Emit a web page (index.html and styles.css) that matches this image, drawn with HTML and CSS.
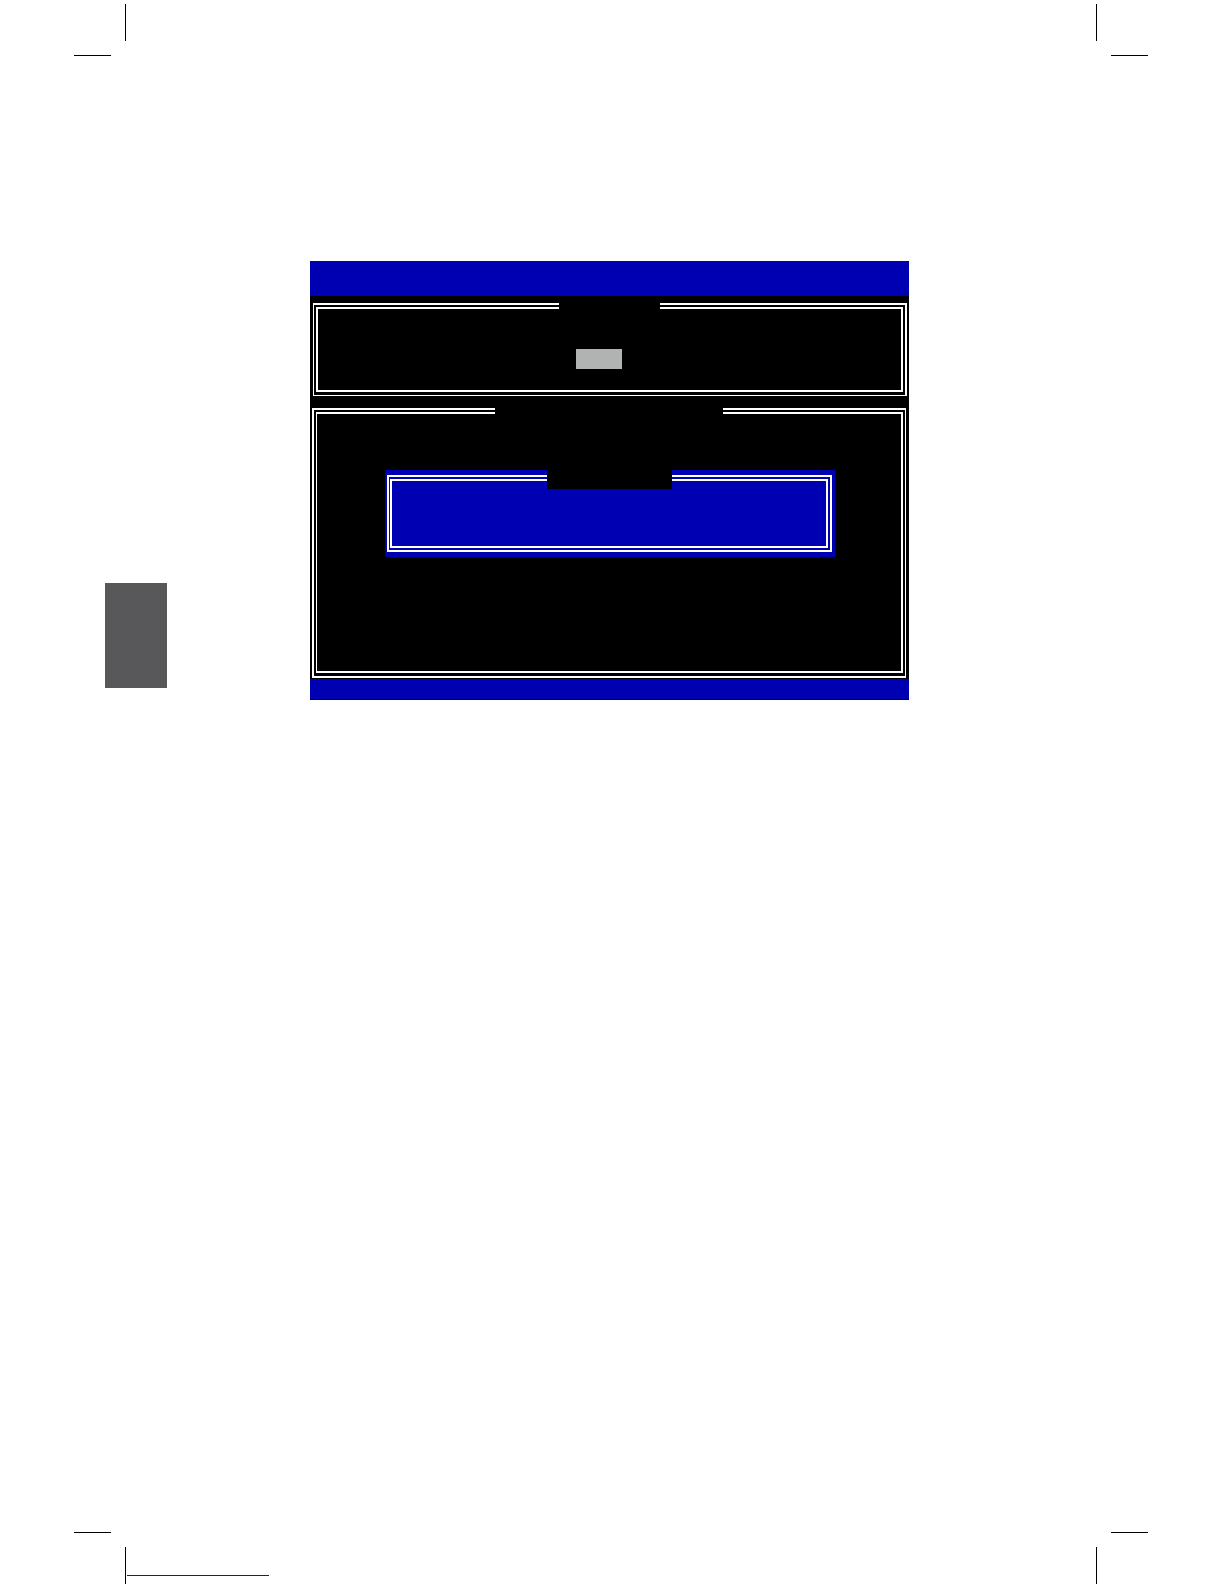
FILE: index.html
```html
<!DOCTYPE html>
<html lang="en">
<head>
  <meta charset="UTF-8">
  <meta name="viewport" content="width=device-width, initial-scale=1.0">
  <title>Setup Utility</title>
  <link rel="stylesheet" href="styles.css">
</head>
<body>
  <div class="page">
    <div class="marks">
      <svg class="mark" viewBox="0 0 52 52" aria-hidden="true">
        <path d="M51 0h1v37h-1zM0 51h37v1H0z"/>
      </svg>
      <svg class="mark" viewBox="0 0 52 52" aria-hidden="true">
        <path d="M0 0h1v37H0zM15 51h37v1H15z"/>
      </svg>
    </div>

    <main class="content">
      <div class="tab"></div>

      <div class="screen">
        <div class="screen-header"></div>

        <section class="panel options">
          <div class="panel-inner">
            <div class="panel-title"></div>
            <div class="menu">
              <div class="selected"></div>
            </div>
          </div>
        </section>

        <section class="panel details">
          <div class="panel-inner">
            <div class="panel-title"></div>
            <div class="dialog">
              <div class="panel">
                <div class="panel-inner">
                  <div class="panel-title"></div>
                </div>
              </div>
            </div>
          </div>
        </section>

        <div class="screen-footer"></div>
      </div>
    </main>

    <footer class="marks">
      <svg class="mark" viewBox="0 0 52 52" aria-hidden="true">
        <path d="M0 0h37v1H0zM51 15h1v37h-1z"/>
      </svg>
      <a class="home-link" href="#" aria-label="Home"></a>
      <svg class="mark" viewBox="0 0 52 52" aria-hidden="true">
        <path d="M15 0h37v1H15zM0 15h1v37H0z"/>
      </svg>
    </footer>
  </div>
</body>
</html>
```

FILE: styles.css
```css
body {
  margin: 0;
  background-color: #ffffff;
  font-family: "Liberation Sans", Arial, sans-serif;
}

.page {
  display: flex;
  flex-direction: column;
  min-height: 100vh;
  padding: 4px 76px 0 74px;
  box-sizing: border-box;
}

/* Crop marks */
.marks {
  display: flex;
  justify-content: space-between;
}

.mark {
  display: block;
  width: 52px;
  height: 52px;
  fill: #000000;
}

.home-link {
  align-self: flex-end;
  width: 142px;
  margin: 0 auto 8px 1px;
  border-bottom: 1px solid #10189a;
}

.content {
  display: flex;
  flex: 1;
  align-items: flex-start;
  padding: 205px 239px 0 31px;
}

/* Chapter tab on the page edge */
.tab {
  width: 62px;
  height: 105px;
  margin: 322px 143px 0 0;
  background-color: #58585a;
}

.screen {
  flex: 1;
  padding-bottom: 1px;
  background-color: #000000;
}

.screen-header {
  height: 35px;
  background-color: #0000b3;
}

.screen-footer {
  height: 20px;
  margin-top: 1px;
  background-color: #0000b3;
}

/* Double line frames */
.panel {
  padding: 2px;
  border: 2px solid #ffffff;
}

.panel-inner {
  border: 2px solid #ffffff;
}

.panel-title {
  height: 19px;
  margin: -11px auto 0;
  background-color: #000000;
}

.options {
  margin: 7px 2px 12px 3px;
  padding-bottom: 3px;
  border-width: 2px 2px 1px 1px;
}

.options .panel-title {
  width: 101px;
}

.menu {
  display: flex;
  justify-content: center;
  padding: 32px 22px 21px 0;
}

.selected {
  width: 46px;
  height: 20px;
  background-color: #b1b3b3;
}

.details {
  margin: 0 3px 0 2px;
  padding-bottom: 3px;
  border-right-width: 1px;
}

.details > .panel-inner {
  padding-bottom: 114px;
  border-left-width: 1px;
}

.details > .panel-inner > .panel-title {
  width: 228px;
}

.dialog {
  margin: 48px 66px 0 68px;
  padding: 5px 3px 5px 2px;
  background-color: #0000b3;
}

.dialog .panel {
  padding-left: 1px;
}

.dialog .panel-inner {
  padding-bottom: 57px;
}

.dialog .panel-title {
  width: 125px;
}
```
